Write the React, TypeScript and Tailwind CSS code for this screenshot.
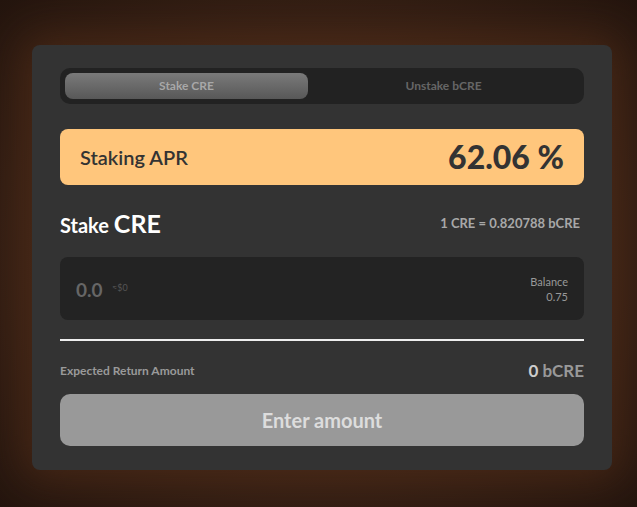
import React, { useState } from 'react';

const font = { fontFamily: 'Lato, "Open Sans", sans-serif' };

/* ---------- main ---------- */
export default function App() {
  const [tab, setTab] = useState<'stake' | 'unstake'>('stake');
  const [amount, setAmount] = useState('');

  return (
    <div
      className="w-[637px] h-[507px] overflow-hidden pt-[45px] pl-[32px] bg-[radial-gradient(ellipse_at_center,#4a2d1c_0%,#3a2216_55%,#24150e_100%)]"
      style={font}
    >
      <div className="w-[580px] h-[425px] rounded-[8px] bg-[#333333] px-[28px] pt-[23px] shadow-[0_0_40px_10px_rgba(90,50,25,0.55)]">
        {/* tabs */}
        <div className="h-[36px] rounded-[10px] bg-[#222222] p-[5px] flex">
          <button
            type="button"
            onClick={() => setTab('stake')}
            className={
              tab === 'stake'
                ? 'w-[243px] rounded-[8px] bg-[linear-gradient(180deg,#7a7a7a,#585858)] text-[12px] font-bold text-[#a8a8a8]'
                : 'w-[243px] rounded-[8px] text-[12px] font-bold text-[#666666]'
            }
          >
            Stake CRE
          </button>
          <button
            type="button"
            onClick={() => setTab('unstake')}
            className={
              tab === 'unstake'
                ? 'flex-1 rounded-[8px] bg-[linear-gradient(180deg,#7a7a7a,#585858)] text-[12px] font-bold text-[#a8a8a8]'
                : 'flex-1 rounded-[8px] text-[12px] font-bold text-[#666666]'
            }
          >
            Unstake bCRE
          </button>
        </div>

        {/* APR */}
        <div className="mt-[25px] h-[56px] rounded-[8px] bg-[#ffc67c] flex items-center justify-between pl-[20px] pr-[20px]">
          <span className="text-[20px] font-semibold text-[#333333]">Staking APR</span>
          <span className="text-[32px] font-black text-[#333333]">62.06 %</span>
        </div>

        {/* header */}
        <div className="mt-[23px] h-[28px] flex items-end justify-between">
          <div className="text-white font-bold leading-none">
            <span className="text-[20px]">Stake </span>
            <span className="text-[25px]">CRE</span>
          </div>
          <span className="text-[13px] font-bold text-[#a8a8a8] pb-[3px] pr-[4px]">1 CRE = 0.820788 bCRE</span>
        </div>

        {/* input */}
        <div className="mt-[21px] h-[63px] rounded-[8px] bg-[#232323] flex items-center justify-between pl-[16px] pr-[16px]">
          <div className="flex items-center gap-[6px] pt-[3px]">
            <input
              value={amount}
              onChange={(e) => setAmount(e.target.value)}
              placeholder="0.0"
              size={3}
              className="w-[30px] bg-transparent outline-none text-[19px] font-bold text-[#dddddd] placeholder:text-[#666666]"
            />
            <span className="text-[9px] text-[#555555] mt-[-4px]">≈$0</span>
          </div>
          <div className="text-right text-[11px] leading-[15px] text-[#999999]">
            <div>Balance</div>
            <div>0.75</div>
          </div>
        </div>

        {/* divider */}
        <div className="mt-[19px] h-[2px] bg-[#eeeeee]" />

        {/* expected */}
        <div className="mt-[17px] flex items-center justify-between">
          <span className="text-[12px] font-bold text-[#9a9a9a]">Expected Return Amount</span>
          <span className="text-[17px] font-bold text-[#999999]">
            <span className="text-[#cccccc]">0</span> bCRE
          </span>
        </div>

        {/* action */}
        <button
          type="button"
          disabled
          className="mt-[10px] w-full h-[52px] rounded-[10px] bg-[#999999] text-[20px] font-bold text-[#dddddd]"
        >
          Enter amount
        </button>
      </div>
    </div>
  );
}
